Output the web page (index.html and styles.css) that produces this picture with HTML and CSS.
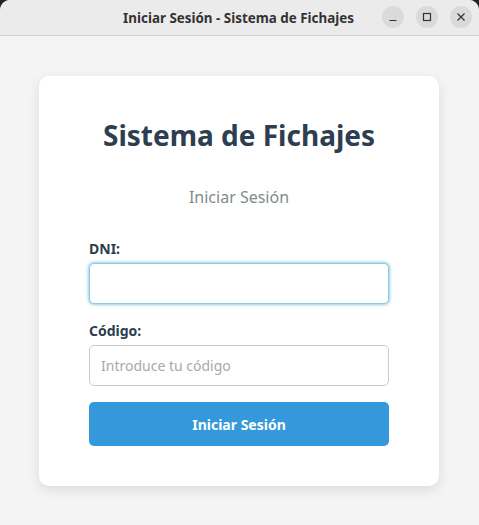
FILE: index.html
```html
<!DOCTYPE html>
<html lang="es">
<head>
<meta charset="utf-8">
<title>Iniciar Sesión - Sistema de Fichajes</title>
<link rel="stylesheet" href="styles.css">
</head>
<body>
<div class="window">
  <header class="titlebar">
    <span class="title">Iniciar Sesión - Sistema de Fichajes</span>
    <div class="controls">
      <span class="ctl"><svg width="10" height="10" viewBox="0 0 10 10"><path d="M1.5 8.5h7" stroke="#333" stroke-width="1.2"/></svg></span>
      <span class="ctl"><svg width="10" height="10" viewBox="0 0 10 10"><rect x="1.5" y="1.5" width="7" height="7" fill="none" stroke="#333" stroke-width="1.2"/></svg></span>
      <span class="ctl"><svg width="10" height="10" viewBox="0 0 10 10"><path d="M1.5 1.5l7 7M8.5 1.5l-7 7" stroke="#333" stroke-width="1.2"/></svg></span>
    </div>
  </header>
  <main class="content">
    <div class="card">
      <h1 class="heading">Sistema de Fichajes</h1>
      <h2 class="sub">Iniciar Sesión</h2>
      <form class="form">
        <label class="label" for="dni">DNI:</label>
        <input class="input input-focus" id="dni" type="text">
        <label class="label label-2" for="codigo">Código:</label>
        <input class="input" id="codigo" type="password" placeholder="Introduce tu código">
        <button class="btn" type="button">Iniciar Sesión</button>
      </form>
    </div>
  </main>
</div>
</body>
</html>
```
FILE: styles.css
```css
* { box-sizing: border-box; }
html, body { margin: 0; padding: 0; }
body {
  background: #1f2326;
  font-family: "Noto Sans", "Open Sans", sans-serif;
  width: 479px;
  height: 525px;
  overflow: hidden;
}
.window {
  height: 525px;
  background: #f4f4f4;
  border-radius: 10px 10px 0 0;
  overflow: hidden;
  display: flex;
  flex-direction: column;
}
.titlebar {
  height: 36px;
  flex: none;
  background: #ebebeb;
  border-bottom: 1px solid #d2d2d2;
  position: relative;
  display: flex;
  align-items: center;
  justify-content: center;
}
.title {
  font-family: "Noto Sans", sans-serif;
  font-weight: 700;
  font-size: 13.4px;
  color: #333;
  margin-left: -2px;
}
.controls {
  position: absolute;
  right: 7px;
  top: 6px;
  display: flex;
  gap: 12px;
}
.ctl {
  width: 22px;
  height: 22px;
  border-radius: 50%;
  background: #dadada;
  display: flex;
  align-items: center;
  justify-content: center;
}
.content {
  flex: 1;
  display: flex;
  justify-content: center;
  padding-top: 40px;
  padding-right: 1px;
}
.card {
  width: 400px;
  height: 410px;
  background: #fff;
  border-radius: 10px;
  box-shadow: 0 4px 12px rgba(0,0,0,0.1);
  padding: 40px 50px;
}
.heading {
  margin: 0;
  font-size: 28px;
  line-height: 38px;
  font-weight: 700;
  color: #2c3e50;
  text-align: center;
}
.sub {
  margin: 32px 0 0;
  font-size: 16px;
  line-height: 22px;
  font-weight: 400;
  color: #7f8c8d;
  text-align: center;
}
.form {
  display: flex;
  flex-direction: column;
  margin-top: 31px;
}
.label {
  font-size: 14px;
  line-height: 19px;
  font-weight: 700;
  color: #2c3e50;
  margin-bottom: 5px;
}
.label-2 { margin-top: 17px; }
.input {
  height: 41px;
  width: 100%;
  border: 1px solid #cccccc;
  border-radius: 5px;
  padding: 0 11px;
  font-family: inherit;
  font-size: 14px;
  color: #333;
  background: #fff;
  outline: none;
}
.input::placeholder { color: #a9a9a9; }
.input-focus {
  border: 1px solid #8ec8e3;
  box-shadow: 0 0 3px 1px rgba(52,160,210,0.5);
}
.btn {
  margin-top: 16px;
  height: 44px;
  border: none;
  border-radius: 5px;
  background: #3498db;
  color: #fff;
  font-family: inherit;
  font-size: 14px;
  font-weight: 700;
}
```
